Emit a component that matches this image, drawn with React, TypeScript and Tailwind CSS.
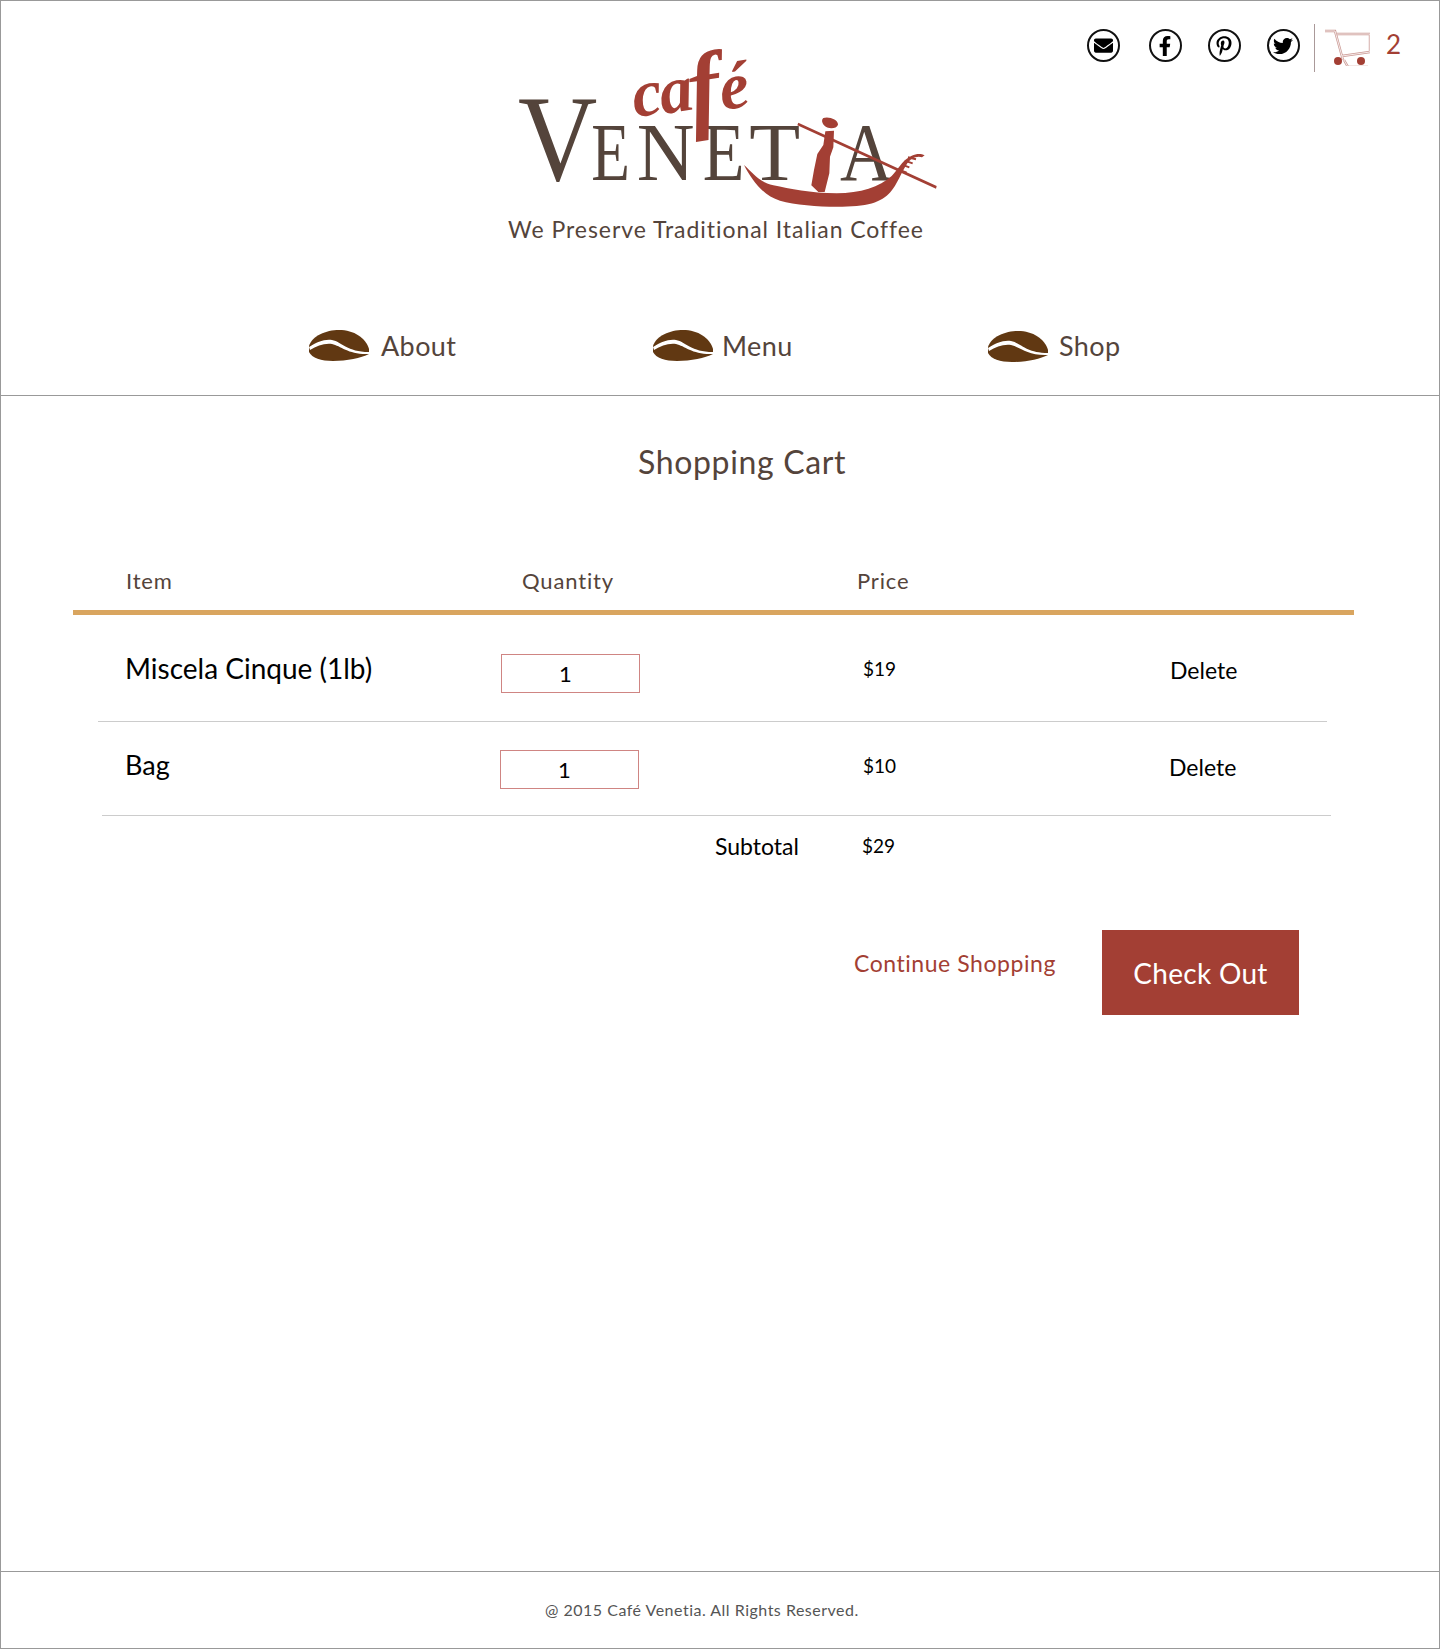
import React from 'react';
import { FaEnvelope, FaFacebookF, FaPinterestP, FaTwitter } from 'react-icons/fa';

const logoLetters = [
  { ch: 'V', x: 84, size: 366, sx: 0.9 },
  { ch: 'E', x: 304, size: 250, sx: 0.76 },
  { ch: 'N', x: 440, size: 250, sx: 0.96 },
  { ch: 'E', x: 638, size: 250, sx: 0.82 },
  { ch: 'T', x: 778, size: 250, sx: 1 },
  { ch: 'A', x: 1050, size: 250, sx: 0.88 },
];

function Logo() {
  return (
    <svg width="470" height="180" viewBox="0 0 1410 540" fill="none">
      {logoLetters.map((l, i) => (
        <text
          key={i}
          transform={`translate(${l.x} 450) scale(${l.sx} 1)`}
          fontFamily="Liberation Serif, serif"
          fontSize={l.size}
          fill="#54443b"
        >
          {l.ch}
        </text>
      ))}
      {/* café, rotated hand lettering */}
      <g transform="rotate(-9 600 250)" fontFamily="Liberation Serif, serif" fontWeight="700" fontStyle="italic" fill="#a33f34">
        <text x="436" y="236" fontSize="200">c</text>
        <text x="518" y="240" fontSize="200">a</text>
        <text x="604" y="276" fontSize="290">f</text>
        <text x="698" y="256" fontSize="200">é</text>
      </g>
      {/* gondola */}
      <path d="M925 278 L1340 468 L1338 476 L922 286 Z" fill="#a33f34" />
      <path
        d="M762 405 C790 430 810 458 850 466 C900 476 960 490 1040 490 C1110 490 1170 470 1205 438 C1222 420 1232 402 1246 390 C1262 376 1285 366 1304 376 L1296 382 C1280 376 1262 386 1252 400 C1240 418 1232 438 1218 462 C1198 498 1170 522 1100 528 C1030 534 930 528 870 512 C820 498 785 450 762 405 Z"
        fill="#a33f34"
      />
      <path d="M1236 404 L1258 412 M1244 392 L1268 400 M1254 382 L1278 388 M1228 420 L1250 428" stroke="#a33f34" strokeWidth="6" />
      {/* gondolier */}
      <path
        d="M1000 264 C1015 258 1045 268 1044 284 C1040 298 1012 298 1002 286 C996 278 994 270 1000 264 Z M1006 304 L1032 302 L1030 352 L1020 380 L1018 430 L1004 486 L985 486 L964 466 L972 420 L982 372 L1000 345 Z"
        fill="#a33f34"
      />
    </svg>
  );
}

function Bean({ className }: { className: string }) {
  return (
    <svg width="60" height="31" viewBox="0 0 60 31" className={`shrink-0 ${className}`}>
      <path d="M0 16 C3 6 17 0 30 0 C45 0 57 8 60 19 L60 24 C52 28 38 31 24 31 C12 31 3 28 0 22 Z" fill="#613812" />
      <path d="M0 17 C8 12 15 9 23 10 C33 12 38 22 60 22 L60 24 C40 25 32 16 23 14 C15 13 8 16 1 20 Z" fill="#ffffff" />
    </svg>
  );
}

function Cart() {
  const d = 'M1 3 H11 L19 32 M13 6 H46 V24 L18 28 M20 32 L24 39 H44';
  return (
    <svg width="46" height="38" viewBox="0 0 46 38" fill="none" className="shrink-0">
      <path d={d} stroke="#cb9a95" strokeWidth="2.4" />
      <path d={d} stroke="#ffffff" strokeWidth="0.8" />
      <circle cx="14" cy="33" r="4" fill="#a33f34" />
      <circle cx="37" cy="33" r="4" fill="#a33f34" />
    </svg>
  );
}

function Social({ children, className }: { children: React.ReactNode; className: string }) {
  return (
    <span className={`mt-[5px] flex h-[33px] w-[33px] shrink-0 items-center justify-center rounded-full border-2 border-[#111] text-black ${className}`}>
      {children}
    </span>
  );
}

export default function App() {
  return (
    <div className="flex h-[1649px] flex-col border border-[#999] bg-white font-[Lato,sans-serif]">
      {/* Header */}
      <header className="h-[395px] shrink-0 border-b border-[#999] text-[#54443b]">
        <div className="flex h-[328px] items-start">
          <div className="ml-[489px] pt-[29px]">
            <Logo />
            <p className="ml-[18px] mt-[4px] text-[23px] leading-[30px] tracking-[0.95px] whitespace-nowrap">We Preserve Traditional Italian Coffee</p>
          </div>
          <div className="ml-auto mr-[38px] mt-[23px] flex h-[48px] items-start">
            <Social className="text-[19px]"><FaEnvelope /></Social>
            <Social className="ml-[29px] text-[20px]"><FaFacebookF /></Social>
            <Social className="ml-[26px] text-[20px]"><FaPinterestP /></Social>
            <Social className="ml-[26px] text-[20px]"><FaTwitter /></Social>
            <span className="ml-[14px] h-[48px] w-px bg-[#a99]" />
            <span className="ml-[9px] mt-[4px]"><Cart /></span>
            <span className="ml-[16px] mt-[1px] text-[26px] text-[#a33f34]">2</span>
          </div>
        </div>
        <nav className="flex h-[34px] items-center text-[27px] leading-[34px] tracking-[0.4px]">
          <a className="ml-[308px] flex w-[344px] items-center gap-[12px]"><Bean className="-mt-[2px]" />About</a>
          <a className="flex w-[335px] items-center gap-[9px]"><Bean className="-mt-px" />Menu</a>
          <a className="flex items-center gap-[11px]"><Bean className="mt-0" />Shop</a>
        </nav>
      </header>

      {/* Cart */}
      <main className="flex-1">
        <h1 className="ml-[637px] mt-[46px] text-[32px] leading-[40px] tracking-[0.65px] text-[#54443b]">Shopping Cart</h1>

        <div className="ml-[72px] mt-[84px] flex h-[49px] w-[1281px] items-start border-b-[5px] border-[#d9a55f] pl-[53px] text-[22px] leading-[30px] tracking-[0.85px] text-[#54443b]">
          <span className="w-[396px]">Item</span>
          <span className="w-[335px]">Quantity</span>
          <span>Price</span>
        </div>

        <div className="ml-[97px] flex h-[107px] w-[1229px] items-start border-b border-[#ccc] pl-[27px] text-black">
          <span className="mt-[35px] w-[376px] text-[28px] leading-[36px]">Miscela Cinque (1lb)</span>
          <input readOnly value="1" className="mt-[39px] h-[39px] w-[139px] border border-[#cf8583] pr-[10px] text-center text-[22px] outline-none" />
          <span className="mt-[39px] ml-[223px] w-[307px] text-[19px] leading-[30px]">$19</span>
          <span className="mt-[40px] text-[23px] leading-[30px]">Delete</span>
        </div>

        <div className="ml-[101px] flex h-[94px] w-[1229px] items-start border-b border-[#ccc] pl-[23px] text-black">
          <span className="mt-[25px] w-[375px] text-[27px] leading-[36px]">Bag</span>
          <input readOnly value="1" className="mt-[28px] h-[39px] w-[139px] border border-[#cf8583] pr-[10px] text-center text-[22px] outline-none" />
          <span className="mt-[29px] ml-[224px] w-[306px] text-[19px] leading-[30px]">$10</span>
          <span className="mt-[30px] text-[23px] leading-[30px]">Delete</span>
        </div>

        <div className="ml-[714px] mt-[15px] flex items-start text-black">
          <span className="w-[147px] text-[23px] leading-[30px]">Subtotal</span>
          <span className="text-[19px] leading-[30px]">$29</span>
        </div>

        <div className="ml-[853px] mt-[69px] flex items-start">
          <a className="mt-[18px] w-[248px] text-[23px] leading-[30px] tracking-[0.55px] text-[#a33f34]">Continue Shopping</a>
          <button className="h-[85px] w-[197px] bg-[#a33f34] text-[28px] tracking-[0.3px] text-white">Check Out</button>
        </div>
      </main>

      {/* Footer */}
      <footer className="h-[77px] shrink-0 border-t border-[#999] pl-[544px] pt-[26px] text-[16px] leading-[24px] tracking-[0.5px] text-[#555]">
        @ 2015 Café Venetia. All Rights Reserved.
      </footer>
    </div>
  );
}
